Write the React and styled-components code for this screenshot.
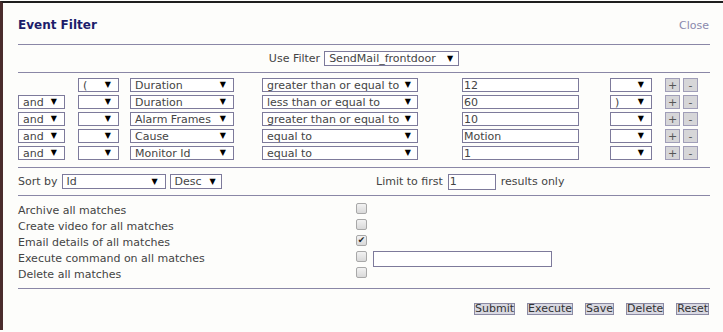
import React from 'react'
import styled, { createGlobalStyle } from 'styled-components'

const Global = createGlobalStyle`
    html, body { margin: 0; padding: 0; background: #fdfdfb; }
    body { font-family: "DejaVu Sans", Verdana, sans-serif; font-size: 11px; color: #444; }
`

const Frame = styled.div`
    margin-top: 1px;
    border-top: 2px solid #1e1e1e;
    border-left: 3px solid #4a2c2c;
    height: 329px;
    box-sizing: border-box;
    background: #fdfdfb;
`

const Content = styled.div`
    padding: 0 13px 0 15px;
`

const Header = styled.div`
    height: 41px;
    box-sizing: border-box;
    padding-top: 3px;
    display: flex;
    align-items: center;
    justify-content: space-between;
`

const Title = styled.h2`
    margin: 0;
    font-size: 12px;
    font-weight: bold;
    color: #1c1c6a;
`

const Close = styled.a`
    color: #8a89ad;
    font-size: 11px;
    margin-right: 1px;
`

const Rule = styled.hr`
    margin: 0;
    border: 0;
    height: 1px;
    background: #8a87a6;
`

const UseRow = styled.div`
    height: 27px;
    display: flex;
    align-items: center;
    justify-content: center;
    gap: 4px;
`

const Select = styled.div`
    width: ${p => p.$w}px;
    height: ${p => p.$h || 14}px;
    box-sizing: border-box;
    border: 1px solid #7d7a9b;
    background: #fff;
    display: flex;
    align-items: center;
    justify-content: space-between;
    padding: 0 ${p => p.$pr || 7}px 0 4px;
    line-height: 1;
    white-space: nowrap;
    overflow: hidden;
`

const Arrow = styled.span`
    font-size: 8px;
    color: #000;
`

const Field = styled.div`
    width: ${p => p.$w}px;
    height: ${p => p.$h || 14}px;
    box-sizing: border-box;
    border: 1px solid #7d7a9b;
    background: #fff;
    display: flex;
    align-items: center;
    padding-left: 1px;
    line-height: 1;
`

const Terms = styled.div`
    padding: 5px 0 7px;
    display: flex;
    flex-direction: column;
    gap: 3px;
`

const TermRow = styled.div`
    display: grid;
    grid-template-columns: 60px 52px 132px 200px 148px 55px 1fr;
    height: 14px;
`

const Cell = styled.div`
    display: flex;
    gap: 3px;
`

const SmallBtn = styled.div`
    width: 15px;
    height: 14px;
    box-sizing: border-box;
    background: #d6d6d8;
    border: 1px solid #a09eb8;
    color: #555;
    display: flex;
    align-items: center;
    justify-content: center;
    font-size: 11px;
    line-height: 1;
`

const SortRow = styled.div`
    height: 27px;
    display: flex;
    align-items: center;
`

const SortGroup = styled.div`
    width: 358px;
    display: flex;
    align-items: center;
    gap: 4px;
`

const LimitGroup = styled.div`
    display: flex;
    align-items: center;
    gap: 5px;
`

const Actions = styled.div`
    padding: 7px 0 5px;
`

const ActionRow = styled.div`
    display: flex;
    height: 16px;
    align-items: flex-start;
`

const ActionLabel = styled.div`
    width: 338px;
    line-height: 16px;
`

const Check = styled.div`
    width: 11px;
    height: 11px;
    box-sizing: border-box;
    border: 1px solid #a8a8a8;
    border-radius: 2px;
    background: linear-gradient(#f2f2f2, #d9d9d9);
    display: flex;
    align-items: center;
    justify-content: center;
    font-size: 9px;
    line-height: 1;
    color: #222;
`

const CmdField = styled(Field)`
    margin-left: 6px;
`

const Buttons = styled.div`
    padding-top: 14px;
    display: flex;
    justify-content: flex-end;
    gap: 12px;
    padding-right: 1px;
`

const Button = styled.button`
    font-family: inherit;
    font-size: 11px;
    color: #333;
    height: 12px;
    line-height: 10px;
    padding: 0;
    background: #d9d9e2;
    border: 1px solid #8b8aa3;
    border-radius: 0;
`

const Sel = ({ w, h, pr, children }) => (
    <Select $w={w} $h={h} $pr={pr}>
        <span>{children}</span>
        <Arrow>▼</Arrow>
    </Select>
)

const terms = [
    { cnj: null, open: '(', attr: 'Duration', op: 'greater than or equal to', val: '12', close: '' },
    { cnj: 'and', open: '', attr: 'Duration', op: 'less than or equal to', val: '60', close: ')' },
    { cnj: 'and', open: '', attr: 'Alarm Frames', op: 'greater than or equal to', val: '10', close: '' },
    { cnj: 'and', open: '', attr: 'Cause', op: 'equal to', val: 'Motion', close: '' },
    { cnj: 'and', open: '', attr: 'Monitor Id', op: 'equal to', val: '1', close: '' },
]

const actions = [
    { label: 'Archive all matches' },
    { label: 'Create video for all matches' },
    { label: 'Email details of all matches', checked: true },
    { label: 'Execute command on all matches', field: true },
    { label: 'Delete all matches' },
]

const App = () => (
    <Frame>
        <Global />
        <Content>
            <Header>
                <Title>Event Filter</Title>
                <Close>Close</Close>
            </Header>
            <Rule />
            <UseRow>
                <span>Use Filter</span>
                <Sel w={135} h={15} pr={5}>SendMail_frontdoor</Sel>
            </UseRow>
            <Rule />
            <Terms>
                {terms.map((t, i) => (
                    <TermRow key={i}>
                        <Cell>{t.cnj && <Sel w={47}>{t.cnj}</Sel>}</Cell>
                        <Cell><Sel w={41}>{t.open}</Sel></Cell>
                        <Cell><Sel w={104}>{t.attr}</Sel></Cell>
                        <Cell><Sel w={156} pr={6}>{t.op}</Sel></Cell>
                        <Cell><Field $w={117}>{t.val}</Field></Cell>
                        <Cell><Sel w={42}>{t.close}</Sel></Cell>
                        <Cell>
                            <SmallBtn>+</SmallBtn>
                            <SmallBtn>-</SmallBtn>
                        </Cell>
                    </TermRow>
                ))}
            </Terms>
            <Rule />
            <SortRow>
                <SortGroup>
                    <span>Sort by</span>
                    <Sel w={104} h={15}>Id</Sel>
                    <Sel w={52} h={15} pr={5}>Desc</Sel>
                </SortGroup>
                <LimitGroup>
                    <span>Limit to first</span>
                    <Field $w={48} $h={16}>1</Field>
                    <span>results only</span>
                </LimitGroup>
            </SortRow>
            <Rule />
            <Actions>
                {actions.map((a, i) => (
                    <ActionRow key={i}>
                        <ActionLabel>{a.label}</ActionLabel>
                        <Check>{a.checked ? '✔' : ''}</Check>
                        {a.field && <CmdField $w={179} $h={16} />}
                    </ActionRow>
                ))}
            </Actions>
            <Rule />
            <Buttons>
                <Button>Submit</Button>
                <Button>Execute</Button>
                <Button>Save</Button>
                <Button>Delete</Button>
                <Button>Reset</Button>
            </Buttons>
        </Content>
    </Frame>
)

export default App
